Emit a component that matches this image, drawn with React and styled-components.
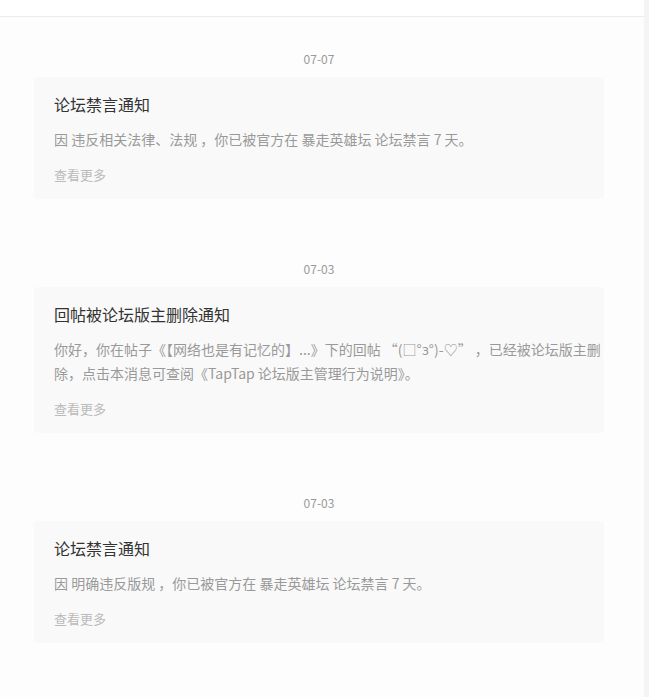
import React from 'react';
import styled, { createGlobalStyle } from 'styled-components';

const notices = [
    {
        date: '07-07',
        title: '论坛禁言通知',
        body: '因 违反相关法律、法规 ，你已被官方在 暴走英雄坛 论坛禁言 7 天。',
    },
    {
        date: '07-03',
        title: '回帖被论坛版主删除通知',
        body: '你好，你在帖子《【网络也是有记忆的】...》下的回帖 “(□°з°)-♡” ，已经被论坛版主删除，点击本消息可查阅《TapTap 论坛版主管理行为说明》。',
    },
    {
        date: '07-03',
        title: '论坛禁言通知',
        body: '因 明确违反版规 ，你已被官方在 暴走英雄坛 论坛禁言 7 天。',
    },
];

const GlobalStyle = createGlobalStyle`
  html, body {
    margin: 0;
    padding: 0;
    background: #fff;
    font-family: "Microsoft YaHei", "Noto Sans CJK SC", "Noto Sans", sans-serif;
  }
`;

export default function App() {
    return (
        <>
            <GlobalStyle />
            <Page>
                <Main>
                    <Header />
                    <List>
                        {notices.map((item, i) => (
                            <Group key={i}>
                                <DateLabel>{item.date}</DateLabel>
                                <Card>
                                    <Title>{item.title}</Title>
                                    <Body>{item.body}</Body>
                                    <More>查看更多</More>
                                </Card>
                            </Group>
                        ))}
                    </List>
                </Main>
                <Track />
            </Page>
        </>
    );
}

const Page = styled.div`
  display: flex;
  min-height: 697px;
`;

const Main = styled.div`
  flex: 1;
  background: #fdfdfd;
`;

// strip on the right edge of the window
const Track = styled.div`
  width: 5px;
  background: #f3f4f6;
`;

const Header = styled.div`
  height: 16px;
  background: #fff;
  border-bottom: 1px solid #ececec;
`;

const List = styled.div`
  width: 570px;
  margin-left: 34px;
  padding-top: 33px;
  display: flex;
  flex-direction: column;
  gap: 61px;
`;

const Group = styled.section`
  display: flex;
  flex-direction: column;
  gap: 9px;
`;

const DateLabel = styled.div`
  text-align: center;
  font-size: 12px;
  line-height: 18px;
  color: #999;
`;

const Card = styled.div`
  background: #f9f9f9;
  border-radius: 4px;
  padding: 15px 2px 13px 20px;
`;

const Title = styled.h3`
  margin: 0;
  font-size: 16px;
  font-weight: normal;
  line-height: 24px;
  color: #333;
`;

const Body = styled.p`
  margin: 11px 0 0;
  font-size: 14px;
  line-height: 24px;
  color: #999;
`;

const More = styled.div`
  margin-top: 13px;
  font-size: 13px;
  line-height: 22px;
  color: #bbb;
  cursor: pointer;
`;
